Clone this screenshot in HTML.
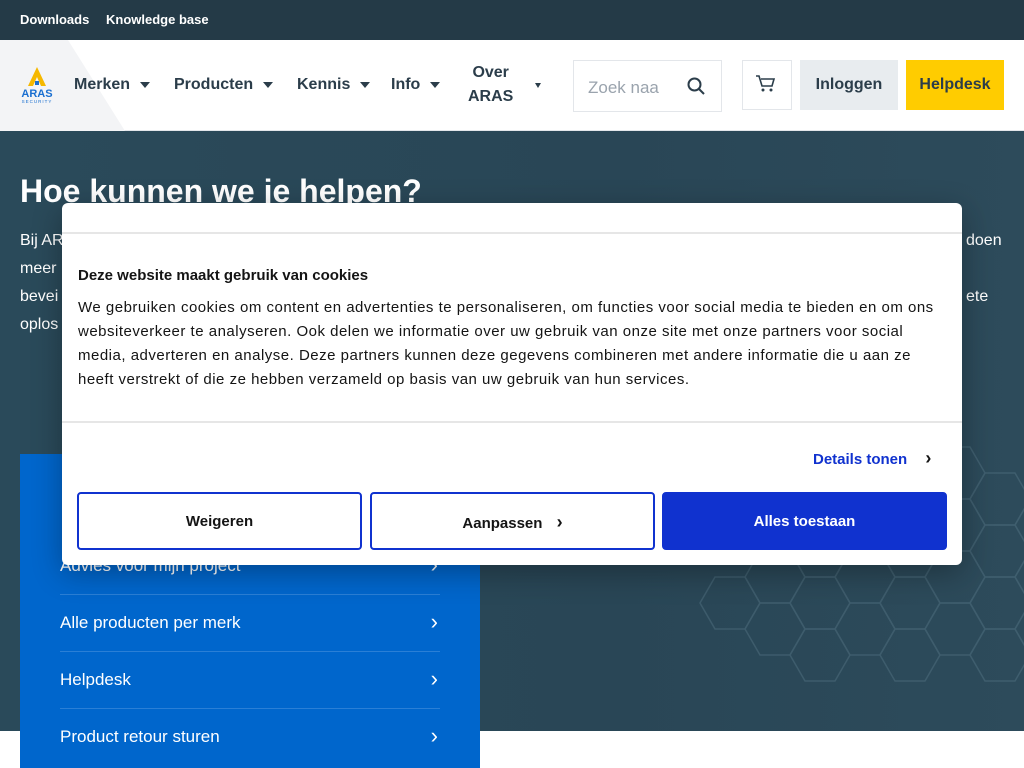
<!DOCTYPE html>
<html><head><meta charset="utf-8"><style>
*{margin:0;padding:0;box-sizing:border-box}
body{width:1024px;height:768px;overflow:hidden;position:relative;font-family:"Liberation Sans",sans-serif;background:#fff}
.top{position:absolute;left:0;top:0;width:1024px;height:40px;background:#243a47;color:#fff;font-weight:bold;font-size:13px}
.top span{position:absolute;top:12px}
.hdr{position:absolute;top:40px;left:0;width:1024px;height:91px;background:#fff;border-bottom:1px solid #e3e6ea}
.logobg{position:absolute;left:0;top:0;width:125px;height:91px;background:#f3f4f6;clip-path:polygon(0 0,68px 0,125px 91px,0 91px)}
.nav{position:absolute;font-weight:bold;font-size:16px;color:#2b3d4a}
.tri{display:inline-block;width:0;height:0;border-left:5px solid transparent;border-right:5px solid transparent;border-top:6px solid #2b3d4a;margin-left:10px;vertical-align:middle}
.hero{position:absolute;left:0;top:131px;width:1024px;height:600px;background:linear-gradient(90deg,#2a4a5a,#294656 60%,#2d4b5b)}
.hero h1{position:absolute;left:20px;top:42px;color:#fff;font-size:32px;font-weight:bold}
.hero p{position:absolute;color:#fff;font-size:16px}
.panel{position:absolute;left:20px;top:454px;width:460px;height:314px;background:#0066cc}
.item{position:absolute;left:60px;width:380px;color:#fff;font-size:17px;border-bottom:1px solid #2a7fd6;height:57px}
.item span{position:absolute;top:18px}
.item b{position:absolute;right:2px;top:14px;font-weight:normal;font-size:22px}
.dlg{position:absolute;left:62px;top:203px;width:900px;height:362px;background:#fff;border-radius:6px;box-shadow:0 8px 30px rgba(0,0,0,.3)}
.btn{position:absolute;top:289px;height:58px;width:285px;border:2px solid #1032cf;border-radius:4px;font-weight:bold;font-size:15px;text-align:center;line-height:56px;color:#141414}
</style></head><body>
<div class="top"><span style="left:20px">Downloads</span><span style="left:106px">Knowledge base</span></div>
<div class="hdr">
<div class="logobg"></div>
<svg style="position:absolute;left:18px;top:26px" width="38" height="38" viewBox="0 0 38 38"><polygon points="19,1 28,20 23,20 19,11 15,20 10,20" fill="#f5b800"/><rect x="17" y="15" width="4" height="4" fill="#1a6fd0"/><text x="19" y="31" text-anchor="middle" font-family="Liberation Sans" font-weight="bold" font-size="11" fill="#1a6fd0">ARAS</text><text x="19" y="37" text-anchor="middle" font-family="Liberation Sans" font-size="4.5" fill="#1a6fd0" letter-spacing="1">SECURITY</text></svg>
<div class="nav" style="left:74px;top:36px">Merken<span class="tri"></span></div>
<div class="nav" style="left:174px;top:36px">Producten<span class="tri"></span></div>
<div class="nav" style="left:297px;top:36px">Kennis<span class="tri"></span></div>
<div class="nav" style="left:391px;top:36px">Info<span class="tri"></span></div>
<div class="nav" style="left:468px;top:21px;text-align:center;line-height:24px">Over<br>ARAS</div>
<div class="tri" style="position:absolute;left:525px;top:43px;border-width:5px 3px 0 3px"></div>
<div style="position:absolute;left:573px;top:20px;width:149px;height:52px;border:1px solid #e3e6ea;color:#9aa3ad;font-size:17px;padding:17px 0 0 14px">Zoek naa</div>
<svg style="position:absolute;left:686px;top:36px" width="20" height="20" viewBox="0 0 20 20"><circle cx="8.5" cy="8.5" r="6" fill="none" stroke="#2b3d4a" stroke-width="2"/><line x1="13" y1="13" x2="18" y2="18" stroke="#2b3d4a" stroke-width="2"/></svg>
<div style="position:absolute;left:742px;top:20px;width:50px;height:50px;border:1px solid #e3e6ea"></div>
<svg style="position:absolute;left:755px;top:34px" width="22" height="20" viewBox="0 0 22 20"><path d="M1 2h3l3 10h10l2-7H6" fill="none" stroke="#2b3d4a" stroke-width="1.6"/><circle cx="8" cy="16" r="1.5" fill="#2b3d4a"/><circle cx="16" cy="16" r="1.5" fill="#2b3d4a"/></svg>
<div style="position:absolute;left:800px;top:20px;width:98px;height:50px;background:#e8ecef;color:#2b3d4a;font-weight:bold;font-size:16px;text-align:center;line-height:50px">Inloggen</div>
<div style="position:absolute;left:906px;top:20px;width:98px;height:50px;background:#ffcc00;color:#2b3d4a;font-weight:bold;font-size:16px;text-align:center;line-height:50px">Helpdesk</div>
</div>
<div class="hero">
<h1>Hoe kunnen we je helpen?</h1>
<p style="left:20px;top:101px">Bij AR</p><p style="left:20px;top:129px">meer</p><p style="left:20px;top:157px">bevei</p><p style="left:20px;top:185px">oplos</p>
<p style="left:966px;top:101px">doen</p><p style="left:966px;top:157px">ete</p>
<svg style="position:absolute;left:580px;top:300px" width="444" height="300" viewBox="0 0 444 300" fill="none" stroke="#557585" stroke-width="1.5" opacity=".45">
<g id="h"><polygon points="30,0 60,0 75,26 60,52 30,52 15,26"/></g>
<use href="#h" x="105" y="146"/><use href="#h" x="150" y="120"/><use href="#h" x="150" y="172"/><use href="#h" x="195" y="94"/><use href="#h" x="195" y="146"/><use href="#h" x="195" y="198"/><use href="#h" x="240" y="120"/><use href="#h" x="240" y="172"/><use href="#h" x="240" y="68"/><use href="#h" x="285" y="94"/><use href="#h" x="285" y="146"/><use href="#h" x="285" y="198"/><use href="#h" x="285" y="42"/><use href="#h" x="330" y="120"/><use href="#h" x="330" y="68"/><use href="#h" x="330" y="172"/><use href="#h" x="330" y="16"/><use href="#h" x="375" y="94"/><use href="#h" x="375" y="42"/><use href="#h" x="375" y="146"/><use href="#h" x="375" y="198"/><use href="#h" x="420" y="120"/><use href="#h" x="420" y="68"/><use href="#h" x="420" y="172"/>
</svg>
</div>
<div class="panel"></div>
<div class="item" style="top:538px"><span>Advies voor mijn project</span><b>›</b></div>
<div class="item" style="top:595px"><span>Alle producten per merk</span><b>›</b></div>
<div class="item" style="top:652px"><span>Helpdesk</span><b>›</b></div>
<div class="item" style="top:709px;border:none"><span>Product retour sturen</span><b>›</b></div>
<div class="dlg">
<div style="position:absolute;left:0;top:29px;width:900px;height:2px;background:#e6e6e6"></div>
<div style="position:absolute;left:16px;top:64px;font-weight:bold;font-size:15px;color:#141414">Deze website maakt gebruik van cookies</div>
<div style="position:absolute;left:16px;top:93px;width:862px;font-size:15px;letter-spacing:0.5px;line-height:24px;color:#141414">We gebruiken cookies om content en advertenties te personaliseren, om functies voor social media te bieden en om ons websiteverkeer te analyseren. Ook delen we informatie over uw gebruik van onze site met onze partners voor social media, adverteren en analyse. Deze partners kunnen deze gegevens combineren met andere informatie die u aan ze heeft verstrekt of die ze hebben verzameld op basis van uw gebruik van hun services.</div>
<div style="position:absolute;left:0;top:218px;width:900px;height:2px;background:#e6e6e6"></div>
<div style="position:absolute;left:751px;top:245px;font-weight:bold;font-size:15px;color:#1032cf">Details tonen <span style="color:#141414;margin-left:14px;font-size:18px">›</span></div>
<div class="btn" style="left:15px">Weigeren</div>
<div class="btn" style="left:308px">Aanpassen <span style="margin-left:10px;font-size:18px">›</span></div>
<div class="btn" style="left:600px;background:#1032cf;color:#fff">Alles toestaan</div>
</div>
</body></html>
